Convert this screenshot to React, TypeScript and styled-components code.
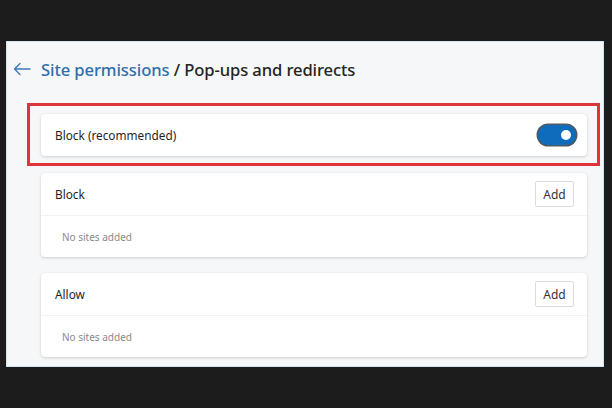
import React from "react";
import styled, { createGlobalStyle } from "styled-components";

const Global = createGlobalStyle`
  html, body { margin: 0; padding: 0; background: #1c1c1c; }
  body { font-family: "Noto Sans", "Open Sans", sans-serif; }
`;

const Stage = styled.div`
  width: 612px;
  height: 408px;
  background: #1c1c1c;
  padding: 41px 0 0 6px;
  box-sizing: border-box;
`;

const Panel = styled.div`
  width: 598px;
  height: 326px;
  box-sizing: border-box;
  background: #f6f7f8;
  border: 1px solid #cfe4ee;
  display: flex;
  flex-direction: column;
`;

const Header = styled.div`
  height: 56px;
  display: flex;
  align-items: center;
  padding: 0 0 2px 6px;
  gap: 10px;
  box-sizing: border-box;
`;

const Title = styled.h1`
  margin: 0;
  font-size: 16.6px;
  font-weight: 500;
  color: #242424;
  letter-spacing: -0.1px;
`;

const Crumb = styled.span`
  color: #2f6fae;
`;

const Body = styled.div`
  display: flex;
  flex-direction: column;
  padding: 5px 3px 0 20px;
`;

const Highlight = styled.div`
  border: 3px solid #e0343b;
  padding: 8px 10px 7px 11px;
  box-sizing: border-box;
  height: 63px;
`;

const Card = styled.div`
  background: #ffffff;
  border-radius: 4px;
  box-shadow: 0 1px 3px rgba(0, 0, 0, 0.16), 0 0 1px rgba(0, 0, 0, 0.08);
`;

const Cards = styled.div`
  display: flex;
  flex-direction: column;
  gap: 16px;
  padding: 7px 13px 0 14px;
`;

const Row = styled.div<{ $h: number; $pr: number }>`
  height: ${(p) => p.$h}px;
  display: flex;
  align-items: center;
  justify-content: space-between;
  padding: 0 ${(p) => p.$pr}px 0 14px;
`;

const Label = styled.span`
  font-size: 11.8px;
  color: #1f1f1f;
`;

const Empty = styled.div`
  height: 42px;
  display: flex;
  align-items: center;
  padding-left: 21px;
  font-size: 10px;
  color: #8a8a8a;
  border-top: 1px solid #f2f2f2;
  box-sizing: border-box;
`;

const AddButton = styled.button`
  width: 39px;
  height: 26px;
  background: #fff;
  border: 1px solid #dcdcdc;
  border-radius: 2px;
  font-family: inherit;
  font-size: 12px;
  color: #333;
  padding: 0;
`;

const Toggle = styled.div`
  width: 38px;
  height: 20px;
  border-radius: 11px;
  background: #0f6cbd;
  box-shadow: 0 0 0 1.5px #4c5966;
  display: flex;
  align-items: center;
  justify-content: flex-end;
  padding-right: 5px;
  box-sizing: border-box;
  margin-right: 1px;
`;

const Knob = styled.div`
  width: 10px;
  height: 10px;
  border-radius: 50%;
  background: #fff;
`;

const BackArrow = () => (
  <svg width="18" height="14" viewBox="0 0 18 14" fill="none" stroke="#3b78b8" strokeWidth="1.3" strokeLinecap="round" strokeLinejoin="round">
    <path d="M17 7H1.5M7 1.5L1.5 7L7 12.5" />
  </svg>
);

const ListCard = ({ title }: { title: string }) => (
  <Card>
    <Row $h={42} $pr={13}>
      <Label>{title}</Label>
      <AddButton>Add</AddButton>
    </Row>
    <Empty>No sites added</Empty>
  </Card>
);

export default function App() {
  return (
    <>
      <Global />
      <Stage>
        <Panel>
          <Header>
            <BackArrow />
            <Title>
              <Crumb>Site permissions</Crumb> / Pop-ups and redirects
            </Title>
          </Header>
          <Body>
            <Highlight>
              <Card>
                <Row $h={42} $pr={10}>
                  <Label>Block (recommended)</Label>
                  <Toggle>
                    <Knob />
                  </Toggle>
                </Row>
              </Card>
            </Highlight>
            <Cards>
              <ListCard title="Block" />
              <ListCard title="Allow" />
            </Cards>
          </Body>
        </Panel>
      </Stage>
    </>
  );
}
